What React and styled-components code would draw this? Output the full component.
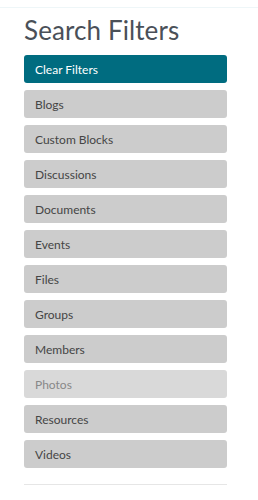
import React from "react";
import styled, { createGlobalStyle } from "styled-components";

const GlobalStyle = createGlobalStyle`
  html, body {
    margin: 0;
    padding: 0;
    background: #ffffff;
    font-family: Lato, "Open Sans", sans-serif;
  }
`;

const filters = [
  { label: "Blogs" },
  { label: "Custom Blocks" },
  { label: "Discussions" },
  { label: "Documents" },
  { label: "Events" },
  { label: "Files" },
  { label: "Groups" },
  { label: "Members" },
  { label: "Photos", disabled: true },
  { label: "Resources" },
  { label: "Videos" },
];

const App = () => {
  return (
    <>
      <GlobalStyle />
      <Page>
        <TopRule />
        <Sidebar>
          <Heading>Search Filters</Heading>
          <FilterList>
            <FilterButton $primary>Clear Filters</FilterButton>
            {filters.map((f) => (
              <FilterButton key={f.label} $disabled={f.disabled}>
                {f.label}
              </FilterButton>
            ))}
          </FilterList>
          <BottomRule />
        </Sidebar>
      </Page>
    </>
  );
};

const Page = styled.div`
  width: 258px;
  min-height: 500px;
  padding-top: 7px;
  box-sizing: border-box;
`;

const TopRule = styled.div`
  height: 1px;
  background: #eef6f8;
`;

const Sidebar = styled.div`
  padding: 0 31px 0 24px;
  display: flex;
  flex-direction: column;
`;

const Heading = styled.h2`
  margin: 6px 0 0;
  font-size: 26px;
  line-height: 32px;
  font-weight: 400;
  color: #4a5058;
  letter-spacing: 0.1px;
`;

const FilterList = styled.div`
  display: flex;
  flex-direction: column;
  gap: 7px;
  margin-top: 9px;
`;

const FilterButton = styled.div`
  height: 28px;
  border-radius: 3px;
  padding: 0 11px;
  display: flex;
  align-items: center;
  font-size: 12px;
  background: ${(p) => (p.$primary ? "#006c80" : p.$disabled ? "#d9d9d9" : "#cccccc")};
  color: ${(p) => (p.$primary ? "#ffffff" : p.$disabled ? "#888888" : "#454545")};
`;

const BottomRule = styled.div`
  height: 1px;
  background: #e6e6e6;
  margin-top: 16px;
`;

export default App;
